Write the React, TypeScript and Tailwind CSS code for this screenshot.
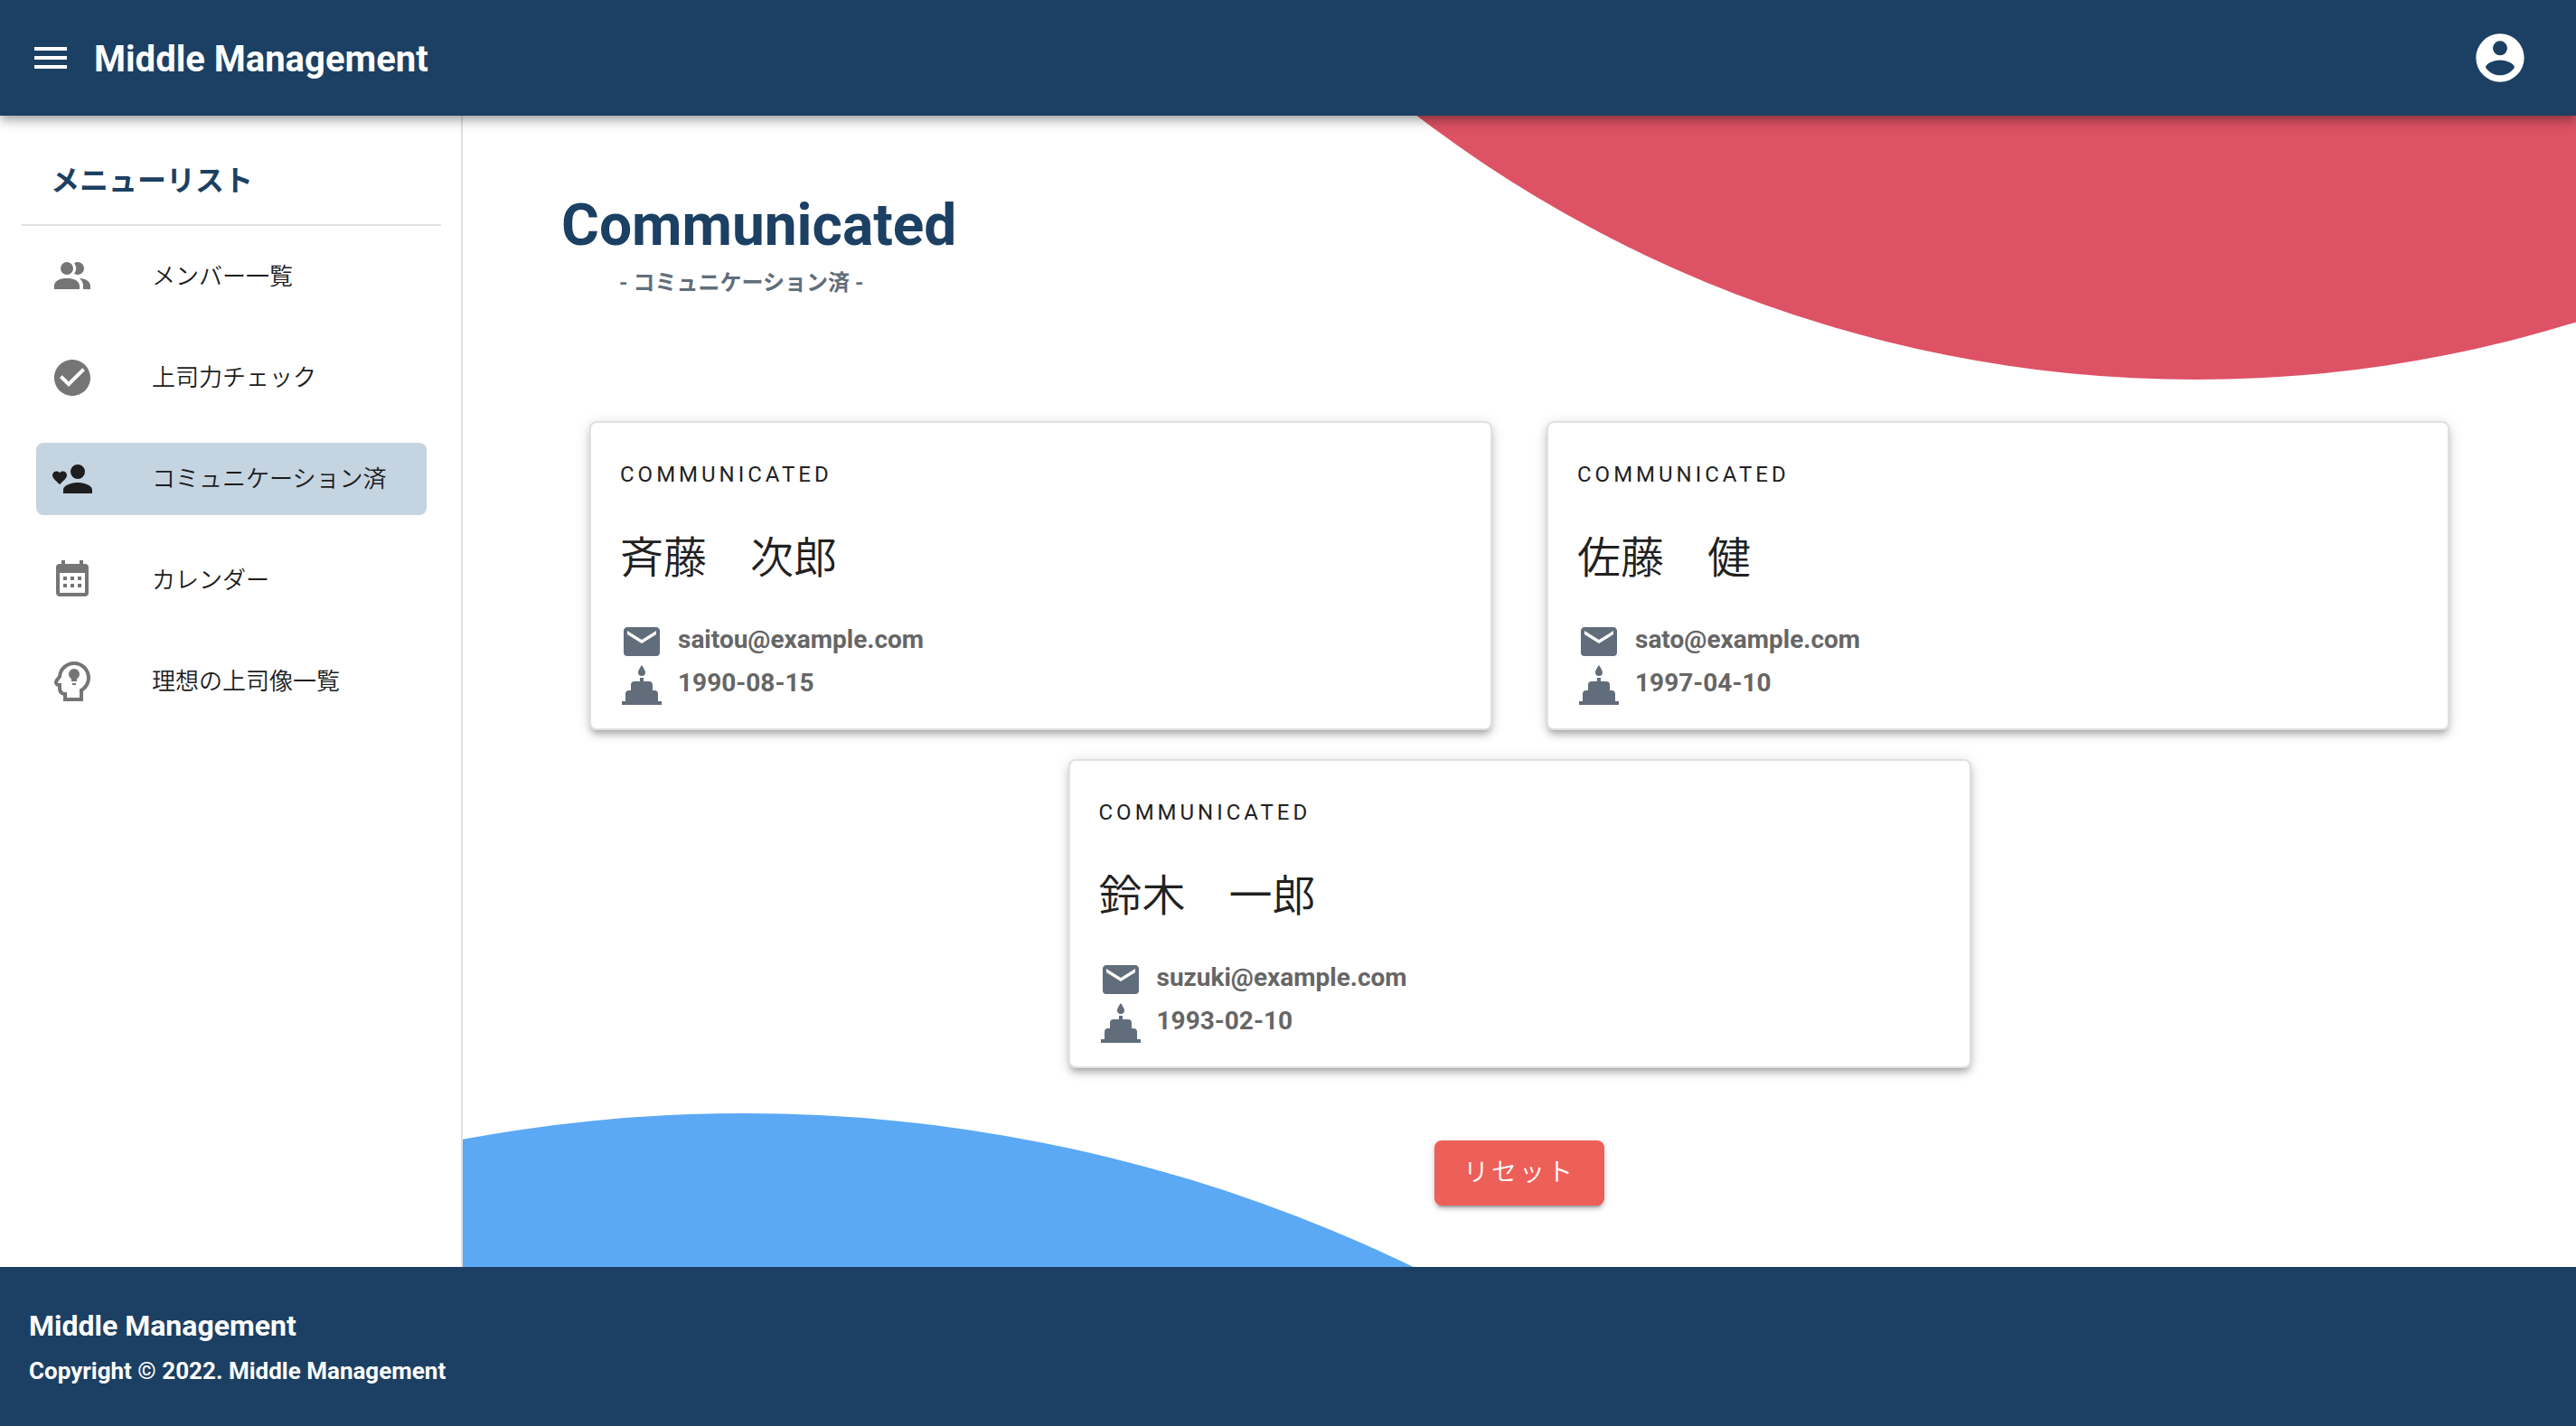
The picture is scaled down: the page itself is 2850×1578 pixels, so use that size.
import React from "react";

const icons = {
  menu: "M3,6H21V8H3V6M3,11H21V13H3V11M3,16H21V18H3V16Z",
  account:
    "M12,19.2C9.5,19.2 7.29,17.92 6,16C6.03,14 10,12.9 12,12.9C14,12.9 17.97,14 18,16C16.71,17.92 14.5,19.2 12,19.2M12,5A3,3 0 0,1 15,8A3,3 0 0,1 12,11A3,3 0 0,1 9,8A3,3 0 0,1 12,5M12,2A10,10 0 0,0 2,12A10,10 0 0,0 12,22A10,10 0 0,0 22,12C22,6.47 17.5,2 12,2Z",
  members:
    "M16 17V19H2V17S2 13 9 13 16 17 16 17M12.5 7.5A3.5 3.5 0 1 0 9 11A3.5 3.5 0 0 0 12.5 7.5M15.94 13A5.32 5.32 0 0 1 18 17V19H22V17S22 13.37 15.94 13M15 4A3.39 3.39 0 0 0 13.07 4.59A5 5 0 0 1 13.07 10.41A3.39 3.39 0 0 0 15 11A3.5 3.5 0 0 0 15 4Z",
  check:
    "M12 2C6.5 2 2 6.5 2 12S6.5 22 12 22 22 17.5 22 12 17.5 2 12 2M10 17L5 12L6.41 10.59L10 14.17L17.59 6.58L19 8L10 17Z",
  heart:
    "M15,14C12.3,14 7,15.3 7,18V20H23V18C23,15.3 17.7,14 15,14M15,12A4,4 0 0,0 19,8A4,4 0 0,0 15,4A4,4 0 0,0 11,8A4,4 0 0,0 15,12M5,15L4.4,14.5C2.4,12.6 1,11.4 1,9.9C1,8.7 2,7.7 3.2,7.7C3.9,7.7 4.6,8 5,8.5C5.4,8 6.1,7.7 6.8,7.7C8,7.7 9,8.6 9,9.9C9,11.4 7.6,12.6 5.6,14.5L5,15Z",
  calendar:
    "M9,10V12H7V10H9M13,10V12H11V10H13M17,10V12H15V10H17M19,3A2,2 0 0,1 21,5V19A2,2 0 0,1 19,21H5C3.89,21 3,20.1 3,19V5A2,2 0 0,1 5,3H6V1H8V3H16V1H18V3H19M19,19V8H5V19H19M9,14V16H7V14H9M13,14V16H11V14H13M17,14V16H15V14H17Z",
  idea:
    "M13 1C8.4 1 4.6 4.4 4.1 8.9L2.5 11C1.9 11.8 1.8 12.8 2.3 13.6C2.6 14.3 3.3 14.8 4 14.9V16C4 17.9 5.3 19.4 7 19.9V23H18V17.5C20.5 15.8 22 13 22 10C22 5 18 1 13 1M13 3C16.86 3 20 6.14 20 10C20 12.8 18.37 15.19 16 16.31V21H9V18H8C6.89 18 6 17.11 6 16V13H4.5C4.08 13 3.84 12.5 4.08 12.19L6 9.66C6.19 5.95 9.23 3 13 3M13 5A3 3 0 0 0 10 8C10 9.2 10.6 10.1 11.5 10.6V12H14.5V10.6C15.4 10.1 16 9.2 16 8A3 3 0 0 0 13 5M12 13V14H14V13Z",
  email:
    "M20,8L12,13L4,8V6L12,11L20,6M20,4H4C2.89,4 2,4.89 2,6V18A2,2 0 0,0 4,20H20A2,2 0 0,0 22,18V6C22,4.89 21.1,4 20,4Z",
  cake:
    "M1 21H3V17A2 2 0 0 1 5 15H6V12A2 2 0 0 1 8 10H11V8H13V10H16A2 2 0 0 1 18 12V15H19A2 2 0 0 1 21 17V21H23V23H1ZM12 1C12.3 1.2 14 4 14 5A2 2 0 0 1 10 5C10 4 11.7 1.2 12 1Z",
};

function Icon({ name, className = "size-12" }: { name: keyof typeof icons; className?: string }) {
  return (
    <svg viewBox="0 0 24 24" className={`shrink-0 ${className}`} fill="currentColor" fillRule="evenodd" aria-hidden="true">
      <path d={icons[name]} />
    </svg>
  );
}

const menu: { icon: keyof typeof icons; label: string; active?: boolean }[] = [
  { icon: "members", label: "メンバー一覧" },
  { icon: "check", label: "上司力チェック" },
  { icon: "heart", label: "コミュニケーション済", active: true },
  { icon: "calendar", label: "カレンダー" },
  { icon: "idea", label: "理想の上司像一覧" },
];

const people = [
  { name: "斉藤　次郎", email: "saitou@example.com", birthday: "1990-08-15" },
  { name: "佐藤　健", email: "sato@example.com", birthday: "1997-04-10" },
  { name: "鈴木　一郎", email: "suzuki@example.com", birthday: "1993-02-10" },
];

function Header() {
  return (
    <header className="relative z-10 flex h-32 items-center bg-[#1c4063] px-8 text-white shadow-[0_4px_8px_-2px_rgba(0,0,0,0.2),0_8px_10px_0_rgba(0,0,0,0.14),0_2px_20px_0_rgba(0,0,0,0.12)]">
      <button type="button" aria-label="メニュー">
        <Icon name="menu" />
      </button>
      <p className="ml-6 pt-1 text-[40px] leading-[60px] font-bold">Middle Management</p>
      <button type="button" aria-label="アカウント" className="mr-5 ml-auto">
        <Icon name="account" className="size-16" />
      </button>
    </header>
  );
}

function Sidebar() {
  return (
    <aside className="w-128 shrink-0 border-r-2 border-[#e0e0e0] bg-white pt-12 pr-[22px] pl-6">
      <h2 className="h-[72px] pl-8 text-[32px] leading-12 font-bold text-[#1c4063]">メニューリスト</h2>
      <nav className="border-t-2 border-[#e0e0e0] px-4 py-4">
        <ul className="flex flex-col gap-8">
          {menu.map((item) => (
            <li key={item.label}>
              <a
                href="#"
                aria-current={item.active ? "page" : undefined}
                className={`flex h-20 items-center gap-16 rounded-lg px-4 ${
                  item.active ? "bg-[#c5d4e1] text-[#1c1e20]" : "text-[#757575]"
                }`}
              >
                <Icon name={item.icon} />
                <span className="text-[26px] leading-8 font-[350] text-[#1c1c1c]">{item.label}</span>
              </a>
            </li>
          ))}
        </ul>
      </nav>
    </aside>
  );
}

function Card({ name, email, birthday }: (typeof people)[number]) {
  return (
    <article className="w-[calc(50%-30px)] rounded-lg border-2 border-[#e0e0e0] bg-white px-8 pt-8 pb-6 text-[#212121] shadow-[0_6px_6px_-4px_rgba(0,0,0,0.2),0_6px_8px_0_rgba(0,0,0,0.14),0_2px_16px_0_rgba(0,0,0,0.12)]">
      <p className="text-[24px] leading-[50px] tracking-[4px]">COMMUNICATED</p>
      <h3 className="my-7 text-[48px] leading-20 font-[350]">{name}</h3>
      <div className="flex flex-col text-[28px] leading-11 font-bold text-[#666]">
        <p className="flex h-12 gap-4">
          <Icon name="email" className="size-12 text-[#616d7b]" />
          {email}
        </p>
        <p className="flex h-12 gap-4">
          <Icon name="cake" className="size-12 text-[#616d7b]" />
          {birthday}
        </p>
      </div>
    </article>
  );
}

function Backdrop() {
  return (
    <svg
      viewBox="0 0 2338 1274"
      preserveAspectRatio="xMidYMid slice"
      className="absolute inset-0 size-full"
      aria-hidden="true"
    >
      <circle cx="1918" cy="-1128" r="1420" fill="#dd5265" />
      <circle cx="311" cy="2802" r="1698" fill="#5ba8f5" />
    </svg>
  );
}

export default function App() {
  return (
    <div className="flex min-h-screen flex-col bg-white font-['Roboto','Noto_Sans_CJK_JP',sans-serif]">
      <Header />
      <div className="flex flex-1">
        <Sidebar />
        <main className="relative min-w-0 flex-1 overflow-hidden px-[109px] pt-20">
          <Backdrop />
          <div className="relative">
            <h1 className="text-[64px] leading-[84px] font-bold text-[#1c4063]">Communicated</h1>
            <p className="pl-16 text-[24px] leading-[42px] font-bold text-[#616d7b]">- コミュニケーション済 -</p>
            <section className="mx-[31px] mt-[132px] flex flex-wrap justify-center gap-x-15 gap-y-8">
              {people.map((person) => (
                <Card key={person.email} {...person} />
              ))}
            </section>
            <div className="mt-20 flex justify-center">
              <button
                type="button"
                className="h-18 rounded-lg bg-[#ed6059] px-8 text-[28px] font-[350] tracking-[3px] text-white shadow-[0_6px_2px_-4px_rgba(0,0,0,0.2),0_4px_4px_0_rgba(0,0,0,0.14),0_2px_10px_0_rgba(0,0,0,0.12)]"
              >
                リセット
              </button>
            </div>
          </div>
        </main>
      </div>
      <footer className="bg-[#1c4063] px-8 pt-10 pb-9 font-bold text-white">
        <p className="text-[32px] leading-[50px]">Middle Management</p>
        <p className="text-[26px] leading-[50px]">Copyright © 2022. Middle Management</p>
      </footer>
    </div>
  );
}
